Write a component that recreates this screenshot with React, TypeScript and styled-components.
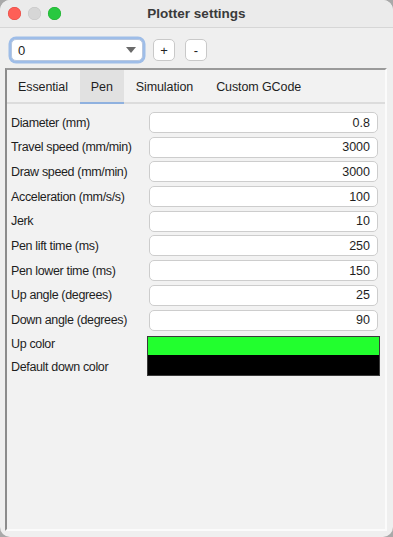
import React, { useState } from 'react';
import styled, { createGlobalStyle } from 'styled-components';

const GlobalStyle = createGlobalStyle`
  html, body {
    margin: 0;
    padding: 0;
    background: #a9a9a9;
  }
  * {
    box-sizing: border-box;
  }
`;

const Window = styled.div`
  width: 393px;
  height: 537px;
  background: #efefef;
  border-radius: 10px;
  overflow: hidden;
  display: flex;
  flex-direction: column;
  font-family: 'Liberation Sans', Arial, sans-serif;
  font-size: 13px;
  color: #1e1e1e;
`;

const TitleBar = styled.div`
  height: 28px;
  flex-shrink: 0;
  display: flex;
  align-items: center;
  position: relative;
  background: #ebebeb;
  border-bottom: 1px solid #d6d6d6;
`;

const Lights = styled.div`
  display: flex;
  gap: 7px;
  padding-left: 8px;
`;

const Light = styled.span<{ $color: string; $edge: string }>`
  width: 13px;
  height: 13px;
  border-radius: 50%;
  background: ${(p) => p.$color};
  box-shadow: inset 0 0 0 0.5px ${(p) => p.$edge};
`;

const Title = styled.div`
  position: absolute;
  left: 0;
  right: 0;
  text-align: center;
  font-weight: bold;
  font-size: 13.5px;
  color: #3a3a3a;
  pointer-events: none;
`;

const Toolbar = styled.div`
  display: flex;
  align-items: center;
  gap: 10px;
  padding: 11px 11px 0;
`;

const Combo = styled.div`
  width: 132px;
  height: 22px;
  background: #fff;
  border: 1px solid #b7c7e0;
  border-radius: 5px;
  box-shadow: 0 0 0 2.5px #9ebde8;
  display: flex;
  align-items: center;
  justify-content: space-between;
  padding: 0 6px;
`;

const Arrow = styled.span`
  width: 0;
  height: 0;
  border-left: 5px solid transparent;
  border-right: 5px solid transparent;
  border-top: 6px solid #6a6a6a;
`;

const SmallButton = styled.button`
  width: 22px;
  height: 22px;
  padding: 0;
  background: #fff;
  border: 1px solid #c9c9c9;
  border-radius: 5px;
  font-family: inherit;
  font-size: 13px;
  color: #222;
  line-height: 1;
`;

const TabWidget = styled.div`
  flex: 1;
  margin: 7px 6px 6px 5px;
  border-top: 2px solid #9a9a9a;
  border-left: 2px solid #8c8c8c;
  border-right: 2px solid #fbfbfb;
  border-bottom: 2px solid #fbfbfb;
  background: #f2f2f2;
  display: flex;
  flex-direction: column;
`;

const TabBar = styled.div`
  height: 34px;
  display: flex;
  align-items: stretch;
  border-bottom: 2px solid #dcdcdc;
`;

const Tab = styled.div<{ $active?: boolean }>`
  display: flex;
  align-items: center;
  padding: 2px 11px 0;
  margin-right: 1px;
  background: ${(p) => (p.$active ? '#e1e1e1' : 'transparent')};
  border-bottom: 2px solid ${(p) => (p.$active ? '#8fb1df' : 'transparent')};
  margin-bottom: -2px;
  color: #1e1e1e;
  font-size: 12.5px;
  letter-spacing: -0.1px;
  cursor: default;
`;

const Form = styled.div`
  display: grid;
  grid-template-columns: 138px 229px;
  row-gap: 3.7px;
  padding: 8px 0 0 4px;
  align-items: center;
`;

const Label = styled.div`
  font-size: 12.5px;
  letter-spacing: -0.35px;
  white-space: nowrap;
`;

const Field = styled.div`
  height: 21px;
  background: #fff;
  border: 1px solid #cdcdcd;
  border-radius: 5px;
  display: flex;
  align-items: center;
  justify-content: flex-end;
  padding-right: 7px;
  font-size: 12.5px;
`;

const ColorBlock = styled.div`
  grid-column: 2;
  margin: 2px -2px 0;
  border: 1px solid #3a3a3a;
  display: grid;
  grid-template-rows: 18px 20px;
`;

const Swatch = styled.div<{ $color: string }>`
  background: ${(p) => p.$color};
`;

const ColorLabel = styled(Label)<{ $row: number }>`
  grid-column: 1;
  grid-row: ${(p) => p.$row};
  height: 19px;
  line-height: 21px;
`;

const fields: [string, string][] = [
  ['Diameter (mm)', '0.8'],
  ['Travel speed (mm/min)', '3000'],
  ['Draw speed (mm/min)', '3000'],
  ['Acceleration (mm/s/s)', '100'],
  ['Jerk', '10'],
  ['Pen lift time (ms)', '250'],
  ['Pen lower time (ms)', '150'],
  ['Up angle (degrees)', '25'],
  ['Down angle (degrees)', '90'],
];

const tabs = ['Essential', 'Pen', 'Simulation', 'Custom GCode'];

const App = () => {
  const [active, setActive] = useState('Pen');
  return (
    <>
      <GlobalStyle />
      <Window>
        <TitleBar>
          <Lights>
            <Light $color="#fe5f57" $edge="#e2463f" />
            <Light $color="#d6d6d6" $edge="#c4c4c4" />
            <Light $color="#28c840" $edge="#1aab29" />
          </Lights>
          <Title>Plotter settings</Title>
        </TitleBar>
        <Toolbar>
          <Combo>
            <span>0</span>
            <Arrow />
          </Combo>
          <SmallButton>+</SmallButton>
          <SmallButton>-</SmallButton>
        </Toolbar>
        <TabWidget>
          <TabBar>
            {tabs.map((t) => (
              <Tab key={t} $active={t === active} onClick={() => setActive(t)}>
                {t}
              </Tab>
            ))}
          </TabBar>
          <Form>
            {fields.map(([label, value]) => (
              <React.Fragment key={label}>
                <Label>{label}</Label>
                <Field>{value}</Field>
              </React.Fragment>
            ))}
            <ColorLabel $row={10}>Up color</ColorLabel>
            <ColorLabel $row={11}>Default down color</ColorLabel>
            <ColorBlock style={{ gridRow: '10 / span 2' }}>
              <Swatch $color="#22ff2e" />
              <Swatch $color="#000000" />
            </ColorBlock>
          </Form>
        </TabWidget>
      </Window>
    </>
  );
};

export default App;
